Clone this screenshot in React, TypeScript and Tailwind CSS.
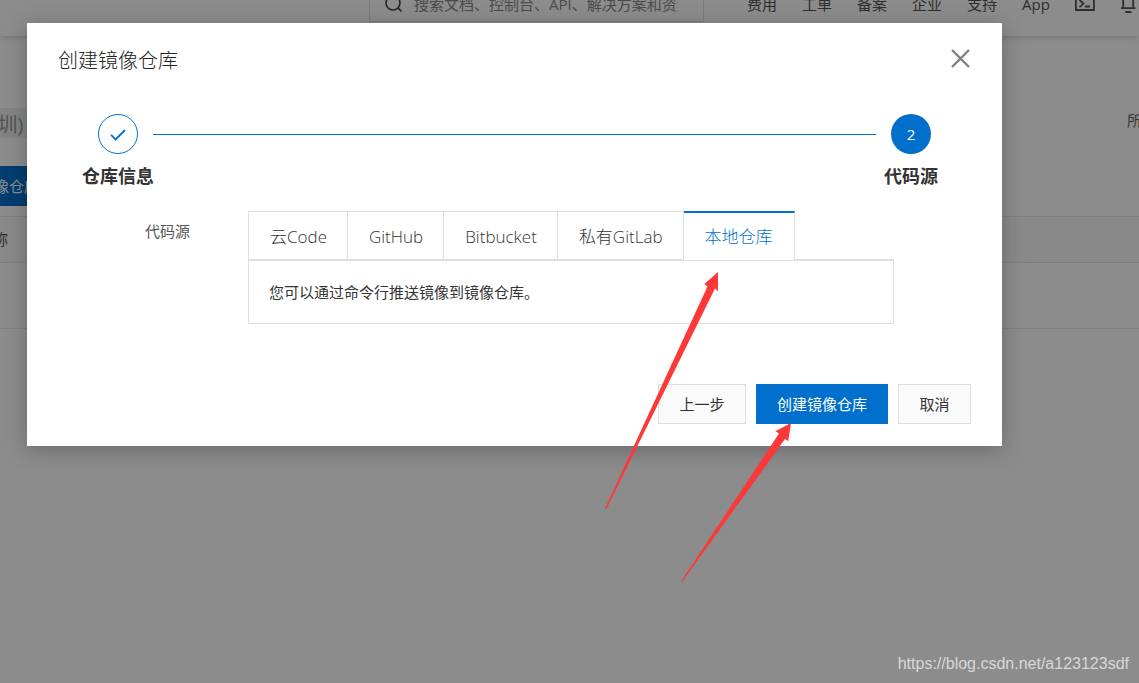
import { useState } from 'react';

const navItems = ['费用', '工单', '备案', '企业', '支持', 'App'];
const tabs = ['云Code', 'GitHub', 'Bitbucket', '私有GitLab', '本地仓库'];

function TopBar() {
  return (
    <div className="h-9 overflow-hidden bg-white shadow-md">
      <header className="-mt-7 flex h-16 items-center text-[15px] text-[#555]">
        <div className="ml-[369px] flex h-9 w-[335px] shrink-0 items-center border border-[#e0e0e0] pl-[15px]">
          <svg className="h-[18px] w-[18px] shrink-0" viewBox="0 0 18 18" fill="none" stroke="#444" strokeWidth="1.6" aria-hidden="true">
            <circle cx="8" cy="8" r="7" />
            <path d="M13 13l3.400 3.400" />
          </svg>
          <input
            aria-label="搜索"
            placeholder="搜索文档、控制台、API、解决方案和资源"
            className="ml-[11px] w-[264px] bg-transparent outline-none placeholder:text-[#888]"
          />
        </div>
        <nav className="ml-[43px] flex shrink-0 items-center gap-[25px] whitespace-nowrap">
          {navItems.map((item) => (
            <a key={item} href="#" className="text-[#555]">
              {item}
            </a>
          ))}
          <a href="#" aria-label="终端">
            <svg className="block h-5 w-5" viewBox="0 0 20 20" fill="none" stroke="#555" strokeWidth="1.8" aria-hidden="true">
              <path d="M.900 .500h18v15.500H.900z" />
              <path d="M4.500 6l4 3.600-4 3.600M10 12.500h5" />
            </svg>
          </a>
          <a href="#" aria-label="通知">
            <svg className="block h-5 w-5" viewBox="0 0 20 20" fill="none" stroke="#555" strokeWidth="1.8" aria-hidden="true">
              <path d="M1 14.200h14.500M3.200 14V7a5 5 0 0 1 10 0V14M5.200 18h6.200" />
            </svg>
          </a>
        </nav>
      </header>
    </div>
  );
}

function RegistryPage() {
  return (
    <div className="absolute inset-0 overflow-hidden bg-white">
      <TopBar />
      <div className="mt-[72px] flex h-[30px] items-center justify-between overflow-hidden whitespace-nowrap">
        <span className="-ml-[85px] flex h-[30px] w-[140px] items-center bg-[#eceef1] pt-1 text-xl text-[#999]">华南1 (深圳)</span>
        <span className="-mr-12 h-[26px] text-[15px] leading-5 text-[#666]">所有仓库</span>
      </div>
      <button type="button" className="mt-7 -ml-[72px] block h-10 bg-[#0070cc] px-[21px] text-[15px] whitespace-nowrap text-white">
        创建镜像仓库
      </button>
      <table className="mt-[10px] w-full text-left text-[15px] text-[#555]">
        <thead>
          <tr className="h-[46px] border-t border-[#e8e8e8] bg-[#fafafa]">
            <th className="font-normal">
              <span className="-ml-[52px] whitespace-nowrap">仓库名称</span>
            </th>
          </tr>
        </thead>
        <tbody>
          <tr className="h-[66px] border-y border-[#e8e8e8]">
            <td />
          </tr>
        </tbody>
      </table>
    </div>
  );
}

function Steps() {
  return (
    <ol className="mt-[35px] flex px-14">
      <li className="flex w-[70px] flex-col items-center">
        <span className="flex h-10 w-10 items-center justify-center rounded-full border border-[#0070cc]">
          <svg className="h-4 w-4" viewBox="0 0 16 16" fill="none" stroke="#0070cc" strokeWidth="1.8" aria-hidden="true">
            <path d="M1 8.800l4.600 4.600L15 4" />
          </svg>
        </span>
        <span className="mt-2 text-lg leading-7 font-bold whitespace-nowrap text-[#333]">仓库信息</span>
      </li>
      <li aria-hidden="true" className="mt-5 h-px flex-1 bg-[#0070cc]" />
      <li className="flex w-[70px] flex-col items-center">
        <span className="flex h-10 w-10 items-center justify-center rounded-full bg-[#0070cc] text-[15px] text-white">2</span>
        <span className="mt-2 text-lg leading-7 font-bold whitespace-nowrap text-[#333]">代码源</span>
      </li>
    </ol>
  );
}

function SourceTabs() {
  const [active, setActive] = useState(4);
  return (
    <div className="min-w-0 flex-1">
      <div role="tablist" aria-labelledby="source-label" className="flex h-[49px] border-b border-[#dedede]">
        {tabs.map((tab, i) => (
          <button
            key={tab}
            type="button"
            role="tab"
            id={`tab-${i}`}
            aria-controls="source-panel"
            aria-selected={i === active}
            onClick={() => setActive(i)}
            className={
              i === active
                ? 'h-[49px] border-t-2 border-r border-t-[#0070cc] border-r-[#dedede] bg-white pr-[21px] pl-[21px] text-[17px] font-light whitespace-nowrap text-[#0070cc]'
                : 'h-12 border-t border-r border-[#dedede] pt-[3px] pr-5 pl-[21px] text-[17px] font-light whitespace-nowrap text-[#333] first:border-l'
            }
          >
            {tab}
          </button>
        ))}
      </div>
      <div id="source-panel" role="tabpanel" aria-labelledby={`tab-${active}`} className="border border-[#dedede] px-5 py-5 text-[15px] leading-[22px] text-[#333]">
        您可以通过命令行推送镜像到镜像仓库。
      </div>
    </div>
  );
}

function CreateDialog() {
  return (
    <section role="dialog" aria-labelledby="dialog-title" className="bg-white pb-[22px] shadow-[0_4px_20px_rgba(0,0,0,0.25)]">
      <div className="flex items-start justify-between px-[31px] pt-5">
        <h1 id="dialog-title" className="text-xl leading-9 font-light text-[#222]">
          创建镜像仓库
        </h1>
        <button type="button" aria-label="关闭" className="pt-1.5">
          <svg className="block h-5 w-5" viewBox="0 0 20 20" fill="none" stroke="#808080" strokeWidth="2.400" aria-hidden="true">
            <path d="M1 1l17 17M18 1l-17 17" />
          </svg>
        </button>
      </div>
      <Steps />
      <div className="mt-[21px] flex pr-[108px]">
        <div id="source-label" className="w-[221px] pt-[9px] pr-[58px] text-right text-[15px] leading-[22px] text-[#555]">
          代码源
        </div>
        <SourceTabs />
      </div>
      <div className="mt-[60px] flex justify-end gap-[10px] px-[31px] text-[15px]">
        <button type="button" className="h-10 min-w-[88px] border border-[#dedede] bg-[#fafafa] px-5 text-[#333]">
          上一步
        </button>
        <button type="button" className="h-10 border border-[#0070cc] bg-[#0070cc] px-5 text-white">
          创建镜像仓库
        </button>
        <button type="button" className="h-10 min-w-[73px] border border-[#dedede] bg-[#fafafa] px-5 text-[#333]">
          取消
        </button>
      </div>
    </section>
  );
}

export default function App() {
  return (
    <div className="relative min-h-screen overflow-hidden font-['Open_Sans','Noto_Sans_CJK_SC',sans-serif]">
      <RegistryPage />
      <div className="absolute inset-0 bg-black/45 pt-[23px] pr-[137px] pl-[27px]">
        <CreateDialog />
      </div>
      <svg className="pointer-events-none absolute top-0 left-0 h-[683px] w-[1139px]" viewBox="0 0 1139 683" fill="#fd3838" aria-hidden="true">
        <path d="M718 272L704.300 284l3.200 2.500L605 508.500l1.500.3L715 288.500l3 2.500z" />
        <path d="M791 423l-15.700 8.300 3.700 2.200L681.300 581l1.200.2L785 439l3.200 2.200z" />
      </svg>
      <p className="absolute right-[10px] bottom-[7px] font-['Liberation_Sans',sans-serif] text-base text-[#d8d8d8]">https://blog.csdn.net/a123123sdf</p>
    </div>
  );
}
